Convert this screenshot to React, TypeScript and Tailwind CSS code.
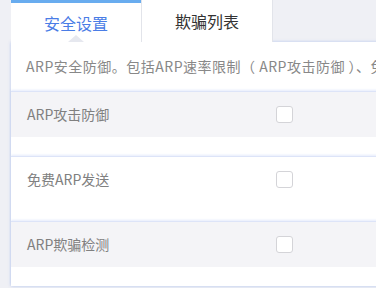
import React from 'react';

const rows = [
  { label: 'ARP攻击防御', gray: true },
  { label: '免费ARP发送', gray: false },
  { label: 'ARP欺骗检测', gray: true },
];

const Checkbox = () => (
  <div className="w-[17px] h-[17px] rounded-[3px] border border-[#d4d4d8] bg-white" />
);

export default function App() {
  return (
    <div
      className="w-[376px] h-[288px] bg-[#eff0f5] overflow-hidden pl-[11px]"
      style={{ fontFamily: '"Noto Sans CJK SC", "Noto Sans", sans-serif' }}
    >
      <div className="flex h-[42px]">
        <div className="relative w-[130px] bg-white border-t-[3px] border-[#68acef] flex items-center justify-center text-[16px] text-[#4a7de6]">
          安全设置
          <div className="absolute left-1/2 -translate-x-1/2 bottom-0 w-0 h-0 border-l-[8px] border-r-[8px] border-b-[7px] border-l-transparent border-r-transparent border-b-[#e6e8ef]" />
        </div>
        <div className="w-[132px] bg-white border-l border-r border-[#e2e4ea] flex items-center justify-center text-[16px] text-[#333]">
          欺骗列表
        </div>
      </div>

      <div className="w-[420px] bg-white shadow-[0_0_3px_rgba(80,120,230,0.35)]">
        <div className="h-[49px] flex items-center pl-[15px] whitespace-nowrap text-[14px] tracking-[0.5px] text-[#888]">
          ARP安全防御。包括ARP速率限制（ ARP攻击防御 ）、免费ARP发送、ARP欺骗检测
        </div>
        {rows.map((r) => (
          <div key={r.label} className="border-t border-[#dde4f8] shadow-[0_-1px_2px_rgba(80,120,230,0.15)] pb-[19px]">
            <div className={`h-[45px] flex items-center ${r.gray ? 'bg-[#f4f4f7]' : 'bg-white'}`}>
              <div className="w-[265px] pl-[16px] text-[14px] text-[#808080]">{r.label}</div>
              <Checkbox />
            </div>
          </div>
        ))}
      </div>
    </div>
  );
}
